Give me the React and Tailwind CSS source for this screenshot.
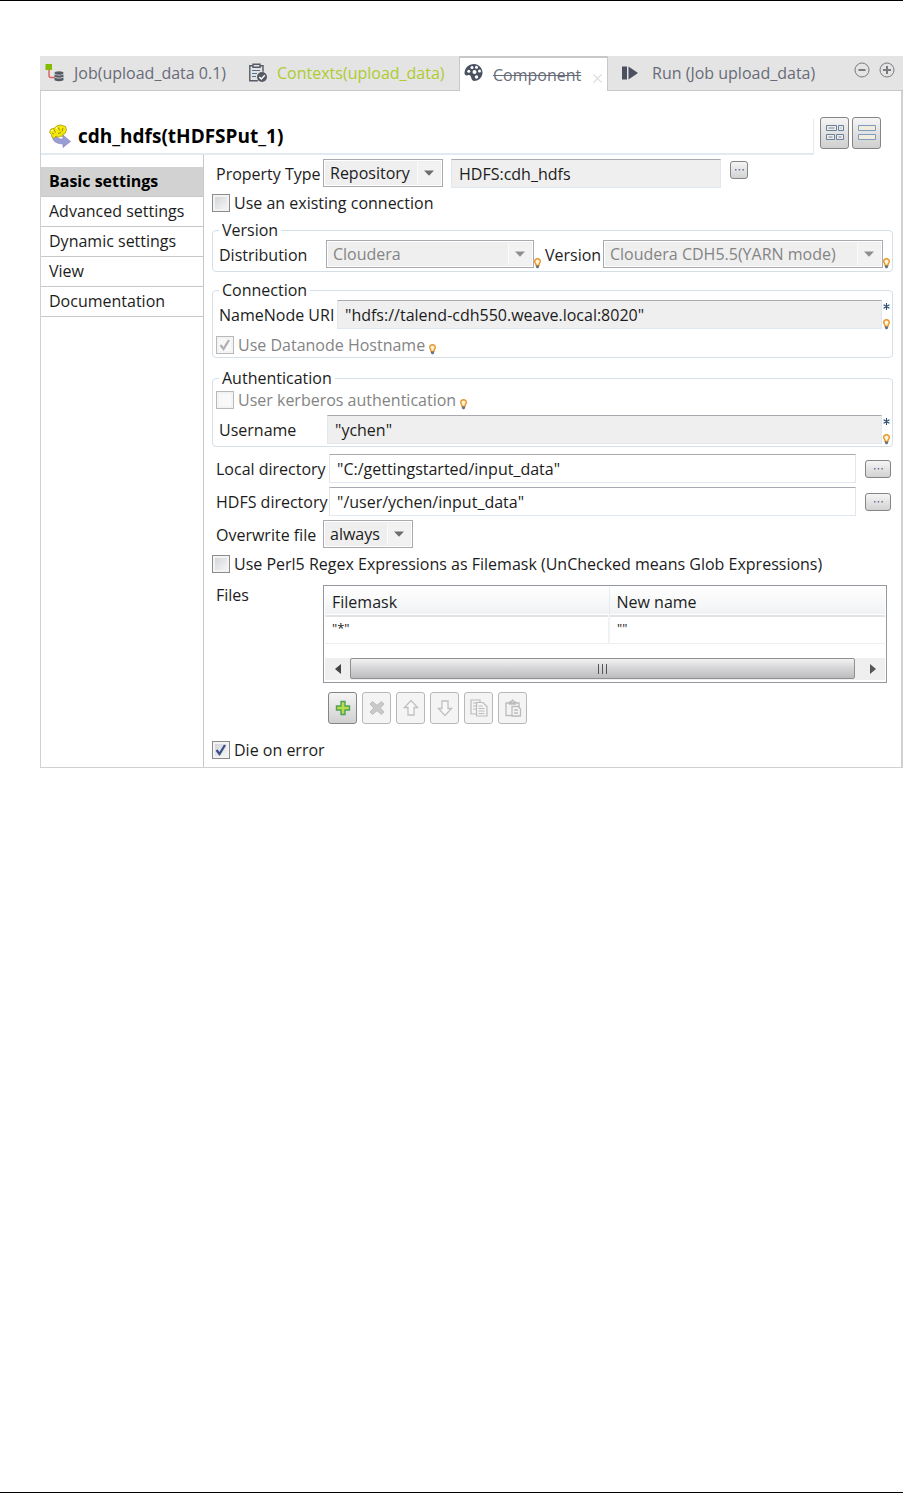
import React, { useState } from 'react';

const menuItems = ['Basic settings', 'Advanced settings', 'Dynamic settings', 'View', 'Documentation'];

const Bulb = () => (
  <svg className="h-[11px] w-[7px] shrink-0" viewBox="0 0 7 11">
    <path d="M3.5.7C1.8.7.7 1.8.7 3.4c0 1.2.9 1.8 1.3 3v1.1h3V6.4c.4-1.2 1.3-1.8 1.3-3C6.3 1.8 5.2.7 3.5.7z" fill="#fff3d0" stroke="#e5952f" strokeWidth="1.4" />
    <path d="M2 7.500h3v2L3.500 10.600 2 9.500z" fill="#5f7593" />
  </svg>
);

const Star = () => (
  <svg className="h-[7px] w-[7px] shrink-0" viewBox="0 0 7 7" stroke="#2c4a70" strokeWidth="1.1">
    <path d="M3.500 0v7M.6 1.700l5.800 3.600M6.400 1.700L.6 5.300" />
  </svg>
);

const Required = () => (
  <div className="flex w-2 shrink-0 flex-col items-center justify-between self-stretch pt-[3px]">
    <Star />
    <Bulb />
  </div>
);

const SelectBox = ({ id, options, className, disabled }) => (
  <div className={`relative h-[28px] border border-[#a9a9b0] bg-[#efefef] ${className}`}>
    <select
      id={id}
      disabled={disabled}
      className="h-full w-full appearance-none border border-white bg-[#efefef] pr-6 pl-[5px] text-[#1c1c1c] outline-none disabled:text-[#848484] disabled:opacity-100"
    >
      {options.map((option) => (
        <option key={option}>{option}</option>
      ))}
    </select>
    <span className="pointer-events-none absolute top-[2px] right-[2px] bottom-[2px] flex w-[23px] items-center justify-center border-l border-[#fafafa] bg-[#f2f2f2] pr-px pb-px">
      <svg className="h-[6px] w-[10px]" viewBox="0 0 10 6">
        <path d="M0 .5h10L5 5.800z" fill={disabled ? '#8f8f8f' : '#6d6d6d'} />
      </svg>
    </span>
  </div>
);

const Check = ({ id, label, defaultChecked, disabled, hint }) => (
  <div className="flex h-5 items-center">
    <span className="relative h-[18px] w-[18px] shrink-0">
      <input
        id={id}
        type="checkbox"
        defaultChecked={defaultChecked}
        disabled={disabled}
        className="peer block h-[18px] w-[18px] appearance-none border border-[#8c8c8c] bg-linear-to-br from-[#cfd1d5] to-[#fafafa] shadow-[inset_0_0_0_2px_#f3f3f3] disabled:border-[#b9b9b9] disabled:from-[#f8f8f8]"
      />
      <svg className="pointer-events-none absolute inset-0 hidden text-[#3b4f8a] peer-checked:block peer-disabled:text-[#b0b0b0]" viewBox="0 0 18 18">
        <path d="M4.500 9l3 4 5.500-9" fill="none" stroke="currentColor" strokeWidth="2.300" />
      </svg>
    </span>
    <label htmlFor={id} className={`ml-1 whitespace-nowrap ${disabled ? 'text-[#848484]' : ''}`}>
      {label}
    </label>
    {hint && <span className="ml-1 flex self-end"><Bulb /></span>}
  </div>
);

const Group = ({ title, children }) => (
  <fieldset className="mr-2 ml-2 min-w-0 rounded border border-[#d5dfe8] pl-[3px]">
    <legend className="ml-[3px] h-5 px-[3px] leading-5">{title}</legend>
    {children}
  </fieldset>
);

const Field = ({ id, value, gray, label, className }) => (
  <input
    id={id}
    type="text"
    aria-label={label}
    defaultValue={value}
    readOnly={gray}
    className={`h-[29px] min-w-0 border border-[#e1e7ee] border-t-[#a9a9b0] pl-[7px] outline-none ${gray ? 'bg-[#efefef]' : 'bg-white'} ${className}`}
  />
);

const Dots = ({ className, label }) => (
  <button aria-label={label} className={`flex h-[18px] shrink-0 items-center justify-center rounded-[3px] border border-[#858585] bg-linear-to-b from-[#f5f5f5] to-[#d2d2d2] ${className}`}>
    <svg className="h-[2px] w-[9px]" viewBox="0 0 9 2" fill="#65749a">
      <path d="M0 0h1.500v1.500H0zM3.700 0h1.500v1.500H3.700zM7.400 0h1.500v1.500H7.400z" />
    </svg>
  </button>
);

const ToolButton = ({ label, disabled, children }) => (
  <button
    aria-label={label}
    disabled={disabled}
    className="flex h-8 w-[29px] items-center justify-center rounded-[3px] border border-[#858585] bg-linear-to-b from-[#f5f5f5] to-[#d0d0d0] disabled:border-[#b4b9be] disabled:from-[#f4f4f4] disabled:to-[#f4f4f4]"
  >
    <svg className="h-[18px] w-[18px]" viewBox="0 0 18 18">{children}</svg>
  </button>
);

const TabBar = () => (
  <nav className="flex h-[35px] bg-[#e4e4e4] text-[#686c78]">
    <a href="#job" className="flex w-[203px] items-center border-b border-[#c8c8c8] pl-[5px] whitespace-nowrap">
      <svg className="mr-[9px] h-5 w-5" viewBox="0 0 20 20">
        <path d="M4 6v6.500q0 2 2 2h4" fill="none" stroke="#dc5f5f" strokeWidth="1.4" />
        <path d="M.5 1h6.500v6H.5z" fill="#84bd00" />
        <g fill="#555a64">
          <ellipse cx="14" cy="10" rx="4.500" ry="1.800" />
          <path d="M9.500 11.400q4.500 2 9 0v2.400q-4.500 1.800-9 0zM9.500 14.500q4.500 1.800 9 0v2.800q-4.500 2-9 0z" />
        </g>
      </svg>
      Job(upload_data 0.1)
    </a>
    <a href="#contexts" className="flex w-[216px] items-center border-b border-[#c8c8c8] pl-[5px] whitespace-nowrap text-[#aecb2e]">
      <svg className="mr-[9px] h-5 w-5" viewBox="0 0 20 20">
        <g fill="none" stroke="#555a64" strokeWidth="1.4">
          <path d="M5 2.800H1.800v15h8M12 2.800h3v6" />
          <path d="M5 1.300h7v3H5z" />
          <path d="M4 7.500h8M4 10.500h5M4 13.500h4" stroke="#4f7391" strokeWidth="1.2" />
        </g>
        <circle cx="14" cy="14" r="5" fill="#555a64" />
        <path d="M11.300 14l2 2 3.500-3.800" fill="none" stroke="#fff" strokeWidth="1.4" />
      </svg>
      Contexts(upload_data)
    </a>
    <a href="#component" className="flex w-[149px] items-center border-x border-t-2 border-[#c8c8c8] bg-white pl-[4px] whitespace-nowrap">
      <svg className="mr-[10px] mb-1 h-[19px] w-[19px]" viewBox="0 0 19 19">
        <path d="M10 1C4.500 1 1 4.500.5 10c0 2 1.500 3 3 2.300C5.500 11.500 6.500 12 7 14c.6 3 2 4.300 4.500 3.800C16 17 18.500 13.500 18.500 9.500S15 1 10 1z" fill="#4b5160" />
        <g fill="#fff">
          <circle cx="4.800" cy="8.300" r="1.500" /><circle cx="8" cy="4.500" r="1.500" /><circle cx="12.500" cy="4.200" r="1.500" /><circle cx="15.500" cy="8" r="1.500" /><circle cx="10.500" cy="9" r="2" /><circle cx="12.500" cy="14" r="1.700" />
        </g>
      </svg>
      <span className="line-through decoration-1">Component</span>
      <svg className="mt-2 mr-[5px] ml-auto h-[9px] w-[9px]" viewBox="0 0 9 9">
        <path d="M.5.5l8 8M8.500.5l-8 8" stroke="#dedede" strokeWidth="1.2" />
      </svg>
    </a>
    <div className="flex flex-1 border-b border-[#c8c8c8]">
      <a href="#run" className="flex items-center pl-[14px] whitespace-nowrap">
        <svg className="mr-[14px] h-4 w-4" viewBox="0 0 16 16" fill="#4b5160">
          <path d="M0 1.500h5v13H0zM6.500 1.500L16 8l-9.500 6.500z" />
        </svg>
        Run (Job upload_data)
      </a>
      <div className="mt-1.5 mr-2 ml-auto flex gap-[9px] self-start">
        <button aria-label="Minimize">
          <svg className="block h-4 w-4" viewBox="0 0 16 16" fill="none" stroke="#7a7a7f">
            <circle cx="8" cy="8" r="7" /><path d="M4.500 8h7" strokeWidth="2" />
          </svg>
        </button>
        <button aria-label="Maximize">
          <svg className="block h-4 w-4" viewBox="0 0 16 16" fill="none" stroke="#7a7a7f">
            <circle cx="8" cy="8" r="7" /><path d="M4 8h8M8 4v8" strokeWidth="2" />
          </svg>
        </button>
      </div>
    </div>
  </nav>
);

const Header = () => (
  <header className="flex h-16">
    <div className="mt-7 flex flex-1 items-center border-r border-b-2 border-[#e2eaf1] pl-[7px] text-[19px] font-bold text-black">
      <svg className="mr-[7px] h-[24px] w-[23px]" viewBox="0 0 23 24">
        <path d="M4 12q1 8 11 8v3.500l7.500-6L15 11v4q-6 .5-7-4z" fill="#9a9cd6" stroke="#7f82c4" strokeWidth=".6" />
        <path d="M1.500 8.500L3 5l4-1 1.500-2 4-1 5 1.500 1 3.500-1.500 3.500-2 .5-.5 2.500-2.500-.5-2 1.500-2-1.500-2 2.500-2-1.500-.5-2.500z" fill="#f5e90a" stroke="#a39b00" strokeWidth=".8" />
        <path d="M6 5.500l1.500 3M10.500 3.500l1 3M15 4l-1 3.500M4 9l2 1M10 9.500l3-1" stroke="#8f8800" strokeWidth=".9" fill="none" />
        <path d="M8 4.500l1-1M3.500 7l1-1" stroke="#fff" strokeWidth="1.2" />
      </svg>
      <h1>cdh_hdfs(tHDFSPut_1)</h1>
    </div>
    <div className="mt-[26px] mr-5 ml-1.5 flex gap-[3px]">
      <button aria-label="Table layout" className="flex h-8 w-[29px] items-center justify-center rounded-[3px] border border-[#858585] bg-linear-to-b from-[#f5f5f5] to-[#cfcfcf]">
        <svg className="h-4 w-[18px]" viewBox="0 0 18 16" fill="#e9edf2" stroke="#6b7f99">
          <path d="M.5.5h10v5H.5zM12.500.5h5v5h-5zM.5 9.500h8v5H.5zM10.500 9.500h7v5h-7z" />
          <path d="M2.500 3h6M14.500 3h1M2.500 12h4M12.500 12h3" stroke="#8b857c" />
        </svg>
      </button>
      <button aria-label="Row layout" className="flex h-8 w-[29px] items-center justify-center rounded-[3px] border border-[#858585] bg-linear-to-b from-[#f5f5f5] to-[#cfcfcf]">
        <svg className="h-4 w-[18px]" viewBox="0 0 18 16" fill="#f3ecdc" stroke="#7c9cc0">
          <path d="M.5.5h17v5H.5zM.5 9.500h17v5H.5z" />
        </svg>
      </button>
    </div>
  </header>
);

const FilesTable = () => (
  <div className="h-[98px] min-w-0 flex-1 border border-[#93989f] p-px">
    <table className="w-full table-fixed border-collapse text-left">
      <thead>
        <tr className="h-[29px] border-b-2 border-[#e0e2e5] bg-linear-to-b from-white to-[#f0f2f4]">
          <th className="w-[284px] border-r border-[#e6ebf0] pt-[2px] pl-[7px] font-normal">Filemask</th>
          <th className="pt-[2px] pl-[7px] font-normal">New name</th>
        </tr>
      </thead>
      <tbody>
        <tr className="h-[27px] border-b border-[#eceff2] text-[13px]">
          <td className="border-r-2 border-[#f0f3f6] pb-1 pl-[7px]">"*"</td>
          <td className="pb-1 pl-[7px]">""</td>
        </tr>
      </tbody>
    </table>
    <div className="mt-[14px] flex h-[22px] items-center bg-[#efefef]">
      <button aria-label="Scroll left" className="flex w-[25px] justify-center">
        <svg className="h-[10px] w-[6px]" viewBox="0 0 6 10"><path d="M6 0v10L0 5z" fill="#444" /></svg>
      </button>
      <div className="flex h-[21px] flex-1 items-center justify-center gap-[3px] rounded-[2px] border border-[#8f8f8f] bg-linear-to-b from-[#f3f3f3] via-[#d4d4d6] to-[#bdbdc1]">
        <i className="h-[10px] w-px bg-[#555]"></i>
        <i className="h-[10px] w-px bg-[#555]"></i>
        <i className="h-[10px] w-px bg-[#555]"></i>
      </div>
      <button aria-label="Scroll right" className="ml-[5px] flex w-[25px] justify-center">
        <svg className="h-[10px] w-[6px]" viewBox="0 0 6 10"><path d="M0 0v10l6-5z" fill="#555" /></svg>
      </button>
    </div>
  </div>
);

const Toolbar = () => (
  <div className="mt-[9px] ml-[124px] flex gap-[5px]">
    <ToolButton label="Add">
      <path d="M7 2.500h4V7h4.500v4H11v4.500H7V11H2.500V7H7z" fill="#b9db4c" stroke="#4da257" strokeWidth="1.4" />
    </ToolButton>
    <ToolButton label="Remove" disabled>
      <path d="M4.500 2.500L9 6.300l4.500-3.800 2.500 2.500L12.300 9l3.700 4-2.500 2.500L9 11.700l-4.500 3.800L2 13l3.700-4L2 5z" fill="#c9c9c9" stroke="#bdbdbd" />
    </ToolButton>
    <ToolButton label="Move up" disabled>
      <path d="M9 1.500L15.500 8.500h-3.500v7.500H6V8.500H2.500z" fill="#f8f8f8" stroke="#c0c0c0" strokeWidth="1.3" />
    </ToolButton>
    <ToolButton label="Move down" disabled>
      <path d="M9 16.500L2.500 9.500H6V2h6v7.500h3.500z" fill="#f8f8f8" stroke="#c0c0c0" strokeWidth="1.3" />
    </ToolButton>
    <ToolButton label="Copy" disabled>
      <g fill="#f4f4f4" stroke="#bcbcbc" strokeWidth="1.2">
        <path d="M1 1h9v14H1zM3 4h3M3 7h3M3 10h3" />
        <path d="M6.500 3.500H13l4 4v9.500H6.500zM8.500 7h4M8.500 9.500h6M8.500 12h6M8.500 14.500h6" />
      </g>
    </ToolButton>
    <ToolButton label="Paste" disabled>
      <g fill="#f4f4f4" stroke="#bcbcbc" strokeWidth="1.3">
        <path d="M2 4h13v12.500H2zM5.500 5V3h1.500l1.500-2L10 3h1.500v2z" />
        <path d="M8 7.500h6l2.500 2.500v7H8zM10 11h4M10 14h4" />
      </g>
    </ToolButton>
  </div>
);

const SettingsForm = () => (
  <form className="min-w-0 flex-1 pb-[7px]" onSubmit={(e) => e.preventDefault()}>
    <div className="mt-1 flex h-[29px] pl-3">
      <label htmlFor="propertyType" className="flex w-[107px] items-center whitespace-nowrap">Property Type</label>
      <SelectBox id="propertyType" options={['Repository', 'Built-In']} className="w-[120px]" />
      <Field id="repository" label="Repository connection" value="HDFS:cdh_hdfs" gray className="ml-2 w-[270px]" />
      <Dots label="Choose repository" className="mt-[2px] ml-[9px] w-[18px]" />
    </div>
    <div className="mt-[5px] mb-[7px] ml-2">
      <Check id="existing" label="Use an existing connection" />
    </div>

    <Group title="Version">
      <div className="flex h-[31px] pr-[2px] pl-[3px]">
        <label htmlFor="distribution" className="w-[107px] leading-[30px]">Distribution</label>
        <SelectBox id="distribution" options={['Cloudera']} disabled className="w-[208px]" />
        <span className="mt-[18px] flex"><Bulb /></span>
        <label htmlFor="version" className="w-[62px] pl-1 leading-[30px]">Version</label>
        <SelectBox id="version" options={['Cloudera CDH5.5(YARN mode)']} disabled className="min-w-0 flex-1" />
        <span className="mt-[18px] flex"><Bulb /></span>
      </div>
    </Group>

    <div className="mt-2">
      <Group title="Connection">
        <div className="flex pr-[2px] pl-[3px]">
          <label htmlFor="namenode" className="w-[118px] leading-[30px] whitespace-nowrap">NameNode URI</label>
          <Field id="namenode" value={'"hdfs://talend-cdh550.weave.local:8020"'} gray className="flex-1" />
          <Required />
        </div>
        <div className="mt-[5px] mb-[2px]">
          <Check id="datanode" label="Use Datanode Hostname" defaultChecked disabled hint />
        </div>
      </Group>
    </div>

    <div className="mt-[10px]">
      <Group title="Authentication">
        <div className="mt-[2px] mb-[5px]">
          <Check id="kerberos" label="User kerberos authentication" disabled hint />
        </div>
        <div className="flex pr-[2px] pb-px pl-[3px]">
          <label htmlFor="username" className="w-[108px] leading-[30px]">Username</label>
          <Field id="username" value={'"ychen"'} gray className="flex-1" />
          <Required />
        </div>
      </Group>
    </div>

    <div className="mt-[7px] flex items-center pr-[10px] pl-3">
      <label htmlFor="localDir" className="w-[113px] whitespace-nowrap">Local directory</label>
      <Field id="localDir" value={'"C:/gettingstarted/input_data"'} className="flex-1" />
      <Dots label="Browse local directory" className="ml-[9px] w-[26px]" />
    </div>
    <div className="mt-1 flex items-center pr-[10px] pl-3">
      <label htmlFor="hdfsDir" className="w-[113px] whitespace-nowrap">HDFS directory</label>
      <Field id="hdfsDir" value={'"/user/ychen/input_data"'} className="flex-1" />
      <Dots label="Browse HDFS directory" className="ml-[9px] w-[26px]" />
    </div>
    <div className="mt-1 flex h-[29px] pl-3">
      <label htmlFor="overwrite" className="w-[107px] leading-[30px] whitespace-nowrap">Overwrite file</label>
      <SelectBox id="overwrite" options={['always', 'never']} className="w-[90px]" />
    </div>
    <div className="mt-[5px] ml-2">
      <Check id="perl" label="Use Perl5 Regex Expressions as Filemask (UnChecked means Glob Expressions)" />
    </div>

    <div className="mt-[11px] flex pr-[14px] pl-3">
      <span className="w-[107px] leading-5">Files</span>
      <FilesTable />
    </div>
    <Toolbar />
    <div className="mt-4 ml-2">
      <Check id="die" label="Die on error" defaultChecked />
    </div>
  </form>
);

const App = () => {
  const [active, setActive] = useState('Basic settings');

  return (
    <div className="flex min-h-screen flex-col border-y border-black bg-white font-['Open_Sans',sans-serif] text-[16px] leading-5 text-[#1c1c1c]">
      <main className="mt-[55px] ml-10">
        <TabBar />
        <div className="border-r-2 border-b border-l border-[#d0d0d0]">
          <Header />
          <div className="flex">
            {/* Settings menu */}
            <ul className="w-[163px] shrink-0 border-r border-[#c8c8c8] pt-3">
              {menuItems.map((item) => (
                <li key={item}>
                  <button
                    onClick={() => setActive(item)}
                    className={`block h-[30px] w-full border-b border-[#c8c8c8] pb-[2px] pl-2 text-left whitespace-nowrap ${active === item ? 'bg-[#d2d2d2] font-bold text-black' : ''}`}
                  >
                    {item}
                  </button>
                </li>
              ))}
            </ul>
            <SettingsForm />
          </div>
        </div>
      </main>
    </div>
  );
};

export default App;
